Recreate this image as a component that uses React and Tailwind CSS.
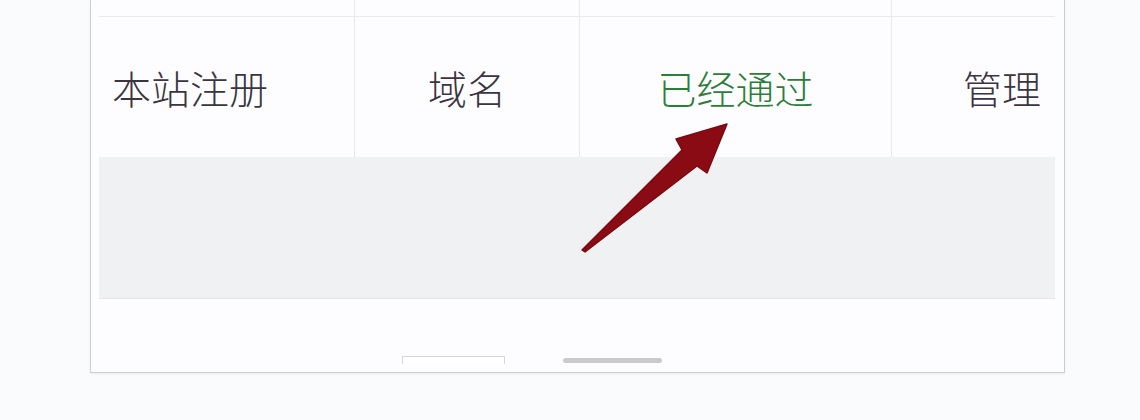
import React from "react";

const cjk = { fontFamily: '"Noto Sans CJK SC", "Noto Sans", sans-serif' };

function Arrow() {
    // annotation arrow drawn over the table
    return (
        <svg
            className="absolute left-0 top-0 pointer-events-none"
            width="1140"
            height="420"
            viewBox="0 0 1140 420"
        >
            <polygon
                points="582,250 682,150 676,139 727,124 707,173 697,166 585,252"
                fill="#8b0b14"
                stroke="#7a0910"
                strokeWidth="1.5"
                strokeLinejoin="round"
            />
        </svg>
    );
}

export default function App() {
    return (
        <div className="relative w-[1140px] h-[420px] bg-[#fafbfd] overflow-hidden" style={cjk}>
            <div className="ml-[90px] w-[975px] h-[373px] bg-[#fdfdff] border-x border-b border-[#cdced5] shadow-[0_1px_2px_rgba(0,0,0,0.06)] flex flex-col pl-[8px] pr-[9px]">
                {/* header stub row */}
                <div className="flex h-[17px] border-b border-[#e9eaef]">
                    <div className="w-[255px]"></div>
                    <div className="w-[225px] border-l border-[#e6e7ec]"></div>
                    <div className="w-[312px] border-l border-[#e6e7ec]"></div>
                    <div className="flex-1 border-l border-[#e6e7ec]"></div>
                </div>

                {/* data row */}
                <div className="flex h-[140px] text-[39px] leading-none font-light text-[#3a3540]">
                    <div className="w-[255px] flex items-center pl-[13px]">本站注册</div>
                    <div className="w-[225px] border-l border-[#e6e7ec] flex items-center justify-center">域名</div>
                    <div className="w-[312px] border-l border-[#e6e7ec] flex items-center justify-center text-[#2a7f36]">
                        已经通过
                    </div>
                    <div className="flex-1 border-l border-[#e6e7ec] flex items-center justify-end pr-[14px]">管理</div>
                </div>

                {/* empty grey row */}
                <div className="h-[142px] bg-[#f0f1f3] border-b border-[#e5e6ea]"></div>

                {/* pager stubs */}
                <div className="flex items-start pt-[57px] pl-[303px] gap-[58px]">
                    <div className="w-[103px] h-[8px] border-t border-x border-[#d6d7dc] bg-white"></div>
                    <div className="w-[99px] h-[5px] mt-[2px] rounded-full bg-[#c9cace]"></div>
                </div>
            </div>
            <Arrow />
        </div>
    );
}
